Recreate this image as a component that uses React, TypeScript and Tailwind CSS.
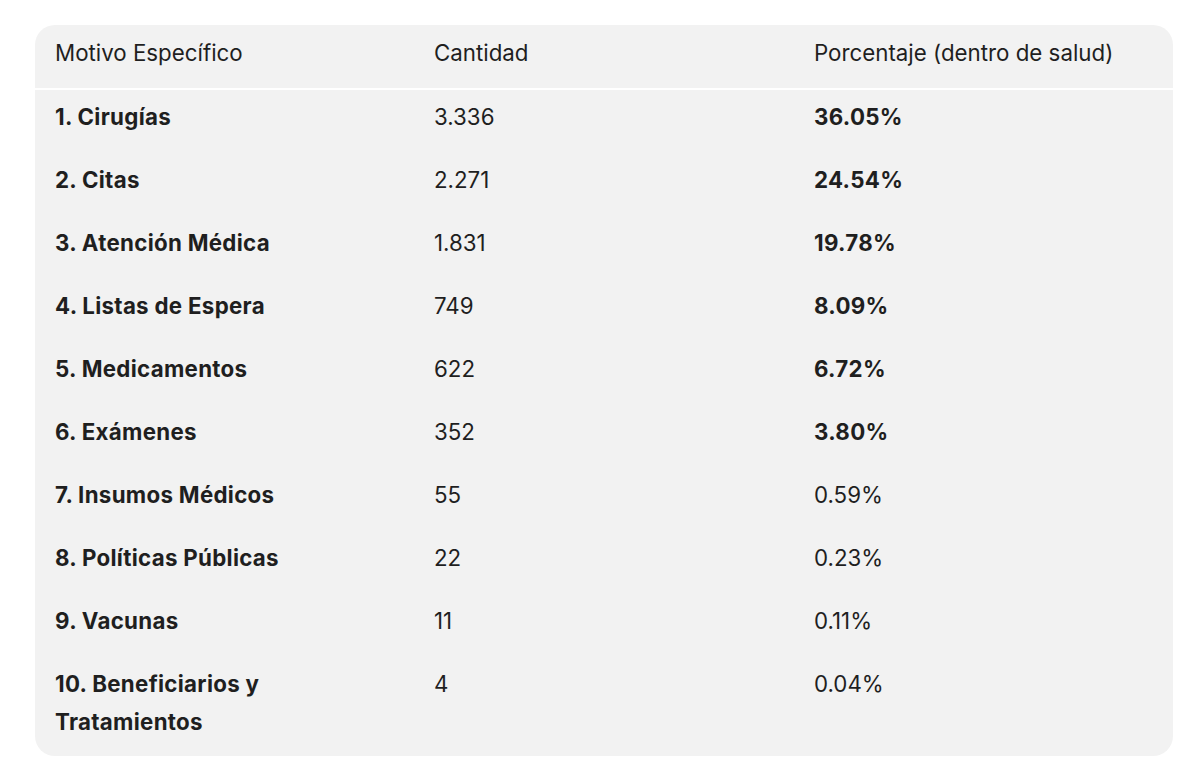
const rows = [
  { name: "1. Cirugías", qty: "3.336", pct: "36.05%", strong: true },
  { name: "2. Citas", qty: "2.271", pct: "24.54%", strong: true },
  { name: "3. Atención Médica", qty: "1.831", pct: "19.78%", strong: true },
  { name: "4. Listas de Espera", qty: "749", pct: "8.09%", strong: true },
  { name: "5. Medicamentos", qty: "622", pct: "6.72%", strong: true },
  { name: "6. Exámenes", qty: "352", pct: "3.80%", strong: true },
  { name: "7. Insumos Médicos", qty: "55", pct: "0.59%", strong: false },
  { name: "8. Políticas Públicas", qty: "22", pct: "0.23%", strong: false },
  { name: "9. Vacunas", qty: "11", pct: "0.11%", strong: false },
  { name: "10. Beneficiarios y Tratamientos", qty: "4", pct: "0.04%", strong: false },
];

export default function App() {
  return (
    <div
      className="w-[1200px] h-[781px] bg-white pt-[25px] pl-[35px] text-[#1f1f1f]"
      style={{ fontFamily: "Inter, 'Noto Sans', sans-serif" }}
    >
      <div className="w-[1138px] h-[731px] bg-[#f2f2f2] rounded-[20px] overflow-hidden">
        <table className="w-full border-collapse text-[22.3px] leading-[38px]">
          <thead>
            <tr className="border-b-2 border-white">
              <th className="w-[399px] pl-5 pt-[9px] pb-[16px] text-left font-normal">Motivo Específico</th>
              <th className="w-[380px] pt-[9px] pb-[16px] text-left font-normal">Cantidad</th>
              <th className="pt-[9px] pb-[16px] text-left font-normal">Porcentaje (dentro de salud)</th>
            </tr>
          </thead>
          <tbody>
            {rows.map((r) => (
              <tr key={r.name}>
                <td className="pl-5 pr-[80px] pt-[8px] pb-[17px] align-top font-bold tracking-[0.3px]">{r.name}</td>
                <td className="pt-[8px] pb-[17px] align-top">{r.qty}</td>
                <td className={`pt-[8px] pb-[17px] align-top ${r.strong ? "font-bold tracking-[0.3px]" : ""}`}>{r.pct}</td>
              </tr>
            ))}
          </tbody>
        </table>
      </div>
    </div>
  );
}
